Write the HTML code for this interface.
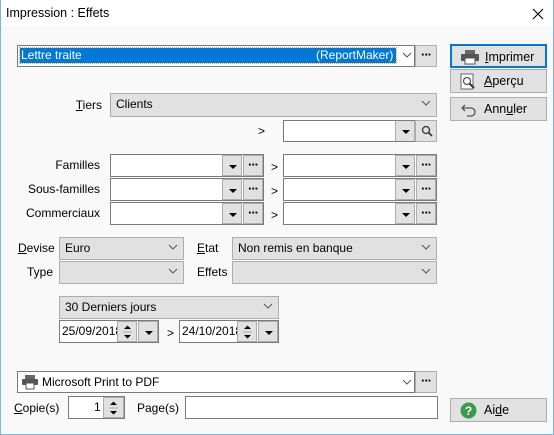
<!DOCTYPE html>
<html><head><meta charset="utf-8"><style>
*{box-sizing:border-box}
body{margin:0;width:554px;height:435px;overflow:hidden;font-family:"Liberation Sans",sans-serif;font-size:12px;color:#000;background:#f9f9f9;position:relative}
.a{position:absolute}
.frame{left:0;top:0;width:554px;height:435px;border:1px solid #7ab4e8;border-top:none}
.title{left:0;top:0;width:554px;height:26px;background:#fff}
.box{position:absolute;background:#fff;border:1px solid #7a7a7a}
.cmb{position:absolute;background:#e1e1e1;border:1px solid #adadad}
.cmb span{position:absolute;left:5px;top:3px}
.chev{position:absolute;right:5px;top:4px;width:10px;height:10px}
.btn{position:absolute;background:#e1e1e1;border:1px solid #adadad}
.dd:after{content:"";position:absolute;left:6px;top:9px;border-left:4px solid transparent;border-right:4px solid transparent;border-top:4px solid #000}
.el:after{content:"···";position:absolute;left:0;right:0;top:1px;text-align:center;font-weight:bold;font-size:13px;letter-spacing:-1px}
.lbl{position:absolute;text-align:right}
.pb{position:absolute;background:#e1e1e1;border:1px solid #adadad;left:450px;width:97px;height:24px}
.pb span{position:absolute;left:33px;top:4px;font-size:12.5px}
u{text-decoration:underline}
</style></head><body>
<div class="a title"></div>
<div class="a" style="left:6px;top:6px;font-size:12.5px">Impression : Effets</div>
<svg class="a" style="left:532px;top:8px" width="12" height="12"><path d="M1 1L11 11M11 1L1 11" stroke="#000" stroke-width="1.1"/></svg>

<div class="box" style="left:17px;top:45px;width:398px;height:22px"></div>
<div class="a" style="left:20px;top:48px;width:376px;height:15px;background:#0078d7;outline:1px dotted #f0a040"></div>
<div class="a" style="left:21px;top:48px;color:#fff">Lettre traite</div>
<div class="a" style="left:316px;top:48px;color:#fff">(ReportMaker)</div>
<svg class="a" style="left:402px;top:51px" width="10" height="8"><path d="M1 2L5 6L9 2" stroke="#555" fill="none"/></svg>
<div class="btn el" style="left:415px;top:45px;width:22px;height:22px"></div>

<div class="pb" style="top:44px;border:2px solid #0078d7"><svg class="a" style="left:8px;top:3px" width="20" height="16"><rect x="5" y="1" width="10" height="4" fill="#666"/><rect x="1" y="5" width="18" height="7" rx="1" fill="#555"/><rect x="5" y="9" width="10" height="6" fill="#fff" stroke="#555"/></svg><span><u>I</u>mprimer</span></div>
<div class="pb" style="top:69px"><svg class="a" style="left:9px;top:3px" width="16" height="17"><rect x="1" y="1" width="12" height="15" fill="#fff" stroke="#666"/><circle cx="7" cy="8" r="3.5" fill="none" stroke="#555" stroke-width="1.3"/><path d="M9.5 10.5L14 15" stroke="#333" stroke-width="2"/></svg><span><u>A</u>perçu</span></div>
<div class="pb" style="top:97px"><svg class="a" style="left:9px;top:4px" width="18" height="15"><path d="M5 3L2 6L5 9M2 6H11A4 4 0 0 1 11 14H7" stroke="#555" fill="none" stroke-width="1.3"/></svg><span>Ann<u>u</u>ler</span></div>

<div class="lbl" style="left:60px;top:98px;width:42px"><u>T</u>iers</div>
<div class="cmb" style="left:110px;top:93px;width:327px;height:24px"><span>Clients</span><svg class="chev" viewBox="0 0 10 10"><path d="M1 3L5 7L9 3" stroke="#555" fill="none"/></svg></div>

<div class="a" style="left:258px;top:124px">&gt;</div>
<div class="box" style="left:283px;top:120px;width:154px;height:22px"></div>
<div class="btn dd" style="left:395px;top:121px;width:20px;height:20px;border-top:none;border-bottom:none"></div>
<div class="btn" style="left:415px;top:120px;width:22px;height:22px"><svg class="a" style="left:5px;top:4px" width="12" height="12"><circle cx="5" cy="5" r="3.5" fill="none" stroke="#333" stroke-width="1.3"/><path d="M7.5 7.5L11 11" stroke="#333" stroke-width="1.6"/></svg></div>

<div class="lbl" style="left:0;top:158px;width:100px">Familles</div>
<div class="lbl" style="left:0;top:182px;width:100px">Sous-familles</div>
<div class="lbl" style="left:0;top:206px;width:100px">Commerciaux</div>

<div class="box" style="left:110px;top:154px;width:154px;height:23px"></div><div class="btn dd" style="left:222px;top:155px;width:20px;height:21px"></div><div class="btn el" style="left:243px;top:155px;width:20px;height:21px"></div>
<div class="a" style="left:271px;top:160px">&gt;</div>
<div class="box" style="left:283px;top:154px;width:154px;height:23px"></div><div class="btn dd" style="left:395px;top:155px;width:20px;height:21px"></div><div class="btn el" style="left:416px;top:155px;width:20px;height:21px"></div>

<div class="box" style="left:110px;top:178px;width:154px;height:23px"></div><div class="btn dd" style="left:222px;top:179px;width:20px;height:21px"></div><div class="btn el" style="left:243px;top:179px;width:20px;height:21px"></div>
<div class="a" style="left:271px;top:184px">&gt;</div>
<div class="box" style="left:283px;top:178px;width:154px;height:23px"></div><div class="btn dd" style="left:395px;top:179px;width:20px;height:21px"></div><div class="btn el" style="left:416px;top:179px;width:20px;height:21px"></div>

<div class="box" style="left:110px;top:202px;width:154px;height:23px"></div><div class="btn dd" style="left:222px;top:203px;width:20px;height:21px"></div><div class="btn el" style="left:243px;top:203px;width:20px;height:21px"></div>
<div class="a" style="left:271px;top:208px">&gt;</div>
<div class="box" style="left:283px;top:202px;width:154px;height:23px"></div><div class="btn dd" style="left:395px;top:203px;width:20px;height:21px"></div><div class="btn el" style="left:416px;top:203px;width:20px;height:21px"></div>

<div class="a" style="left:18px;top:241px"><u>D</u>evise</div>
<div class="cmb" style="left:59px;top:237px;width:125px;height:23px"><span>Euro</span><svg class="chev" viewBox="0 0 10 10"><path d="M1 3L5 7L9 3" stroke="#555" fill="none"/></svg></div>
<div class="a" style="left:197px;top:241px"><u>E</u>tat</div>
<div class="cmb" style="left:232px;top:237px;width:205px;height:23px"><span>Non remis en banque</span><svg class="chev" viewBox="0 0 10 10"><path d="M1 3L5 7L9 3" stroke="#555" fill="none"/></svg></div>
<div class="a" style="left:27px;top:265px">Type</div>
<div class="cmb" style="left:59px;top:261px;width:125px;height:23px"><svg class="chev" viewBox="0 0 10 10"><path d="M1 3L5 7L9 3" stroke="#555" fill="none"/></svg></div>
<div class="a" style="left:197px;top:265px">Effets</div>
<div class="cmb" style="left:232px;top:261px;width:205px;height:23px"><svg class="chev" viewBox="0 0 10 10"><path d="M1 3L5 7L9 3" stroke="#555" fill="none"/></svg></div>

<div class="cmb" style="left:59px;top:296px;width:220px;height:23px"><span>30 Derniers jours</span><svg class="chev" viewBox="0 0 10 10"><path d="M1 3L5 7L9 3" stroke="#555" fill="none"/></svg></div>
<div class="box" style="left:59px;top:320px;width:100px;height:23px;overflow:hidden"><span class="a" style="left:2px;top:3px">25/09/2018</span></div>
<div class="btn" style="left:117px;top:321px;width:20px;height:21px"><svg class="a" style="left:5px;top:2px" width="9" height="16"><path d="M1 5L4.5 1.5L8 5ZM1 11L4.5 14.5L8 11Z" fill="#000"/><path d="M0 8H9" stroke="#adadad"/></svg></div>
<div class="btn dd" style="left:138px;top:321px;width:20px;height:21px"></div>
<div class="a" style="left:167px;top:326px">&gt;</div>
<div class="box" style="left:179px;top:320px;width:100px;height:23px;overflow:hidden"><span class="a" style="left:2px;top:3px">24/10/2018</span></div>
<div class="btn" style="left:237px;top:321px;width:20px;height:21px"><svg class="a" style="left:5px;top:2px" width="9" height="16"><path d="M1 5L4.5 1.5L8 5ZM1 11L4.5 14.5L8 11Z" fill="#000"/><path d="M0 8H9" stroke="#adadad"/></svg></div>
<div class="btn dd" style="left:258px;top:321px;width:20px;height:21px"></div>

<div class="box" style="left:17px;top:371px;width:398px;height:22px"></div>
<svg class="a" style="left:21px;top:374px" width="18" height="16"><rect x="4" y="1" width="10" height="4" fill="#666"/><rect x="1" y="5" width="16" height="6" rx="1" fill="#555"/><rect x="5" y="9" width="8" height="6" fill="#fff" stroke="#555"/></svg>
<div class="a" style="left:42px;top:375px">Microsoft Print to PDF</div>
<svg class="a" style="left:402px;top:378px" width="10" height="8"><path d="M1 2L5 6L9 2" stroke="#555" fill="none"/></svg>
<div class="btn el" style="left:415px;top:371px;width:22px;height:22px"></div>

<div class="a" style="left:14px;top:401px"><u>C</u>opie(s)</div>
<div class="box" style="left:68px;top:396px;width:57px;height:23px"></div>
<div class="a" style="left:94px;top:400px">1</div>
<div class="btn" style="left:103px;top:397px;width:21px;height:21px"><svg class="a" style="left:5px;top:2px" width="9" height="16"><path d="M1 5L4.5 1.5L8 5ZM1 11L4.5 14.5L8 11Z" fill="#000"/><path d="M0 8H9" stroke="#adadad"/></svg></div>
<div class="a" style="left:137px;top:401px">Page(s)</div>
<div class="box" style="left:185px;top:396px;width:253px;height:23px"></div>

<div class="pb" style="top:398px"><svg class="a" style="left:9px;top:3px" width="17" height="17"><circle cx="8.5" cy="8.5" r="8" fill="#3a9a4a"/><text x="8.5" y="13" font-size="12" font-weight="bold" fill="#fff" text-anchor="middle" font-family="Liberation Sans">?</text></svg><span>Ai<u>d</u>e</span></div>

<div class="a frame"></div>
</body></html>
